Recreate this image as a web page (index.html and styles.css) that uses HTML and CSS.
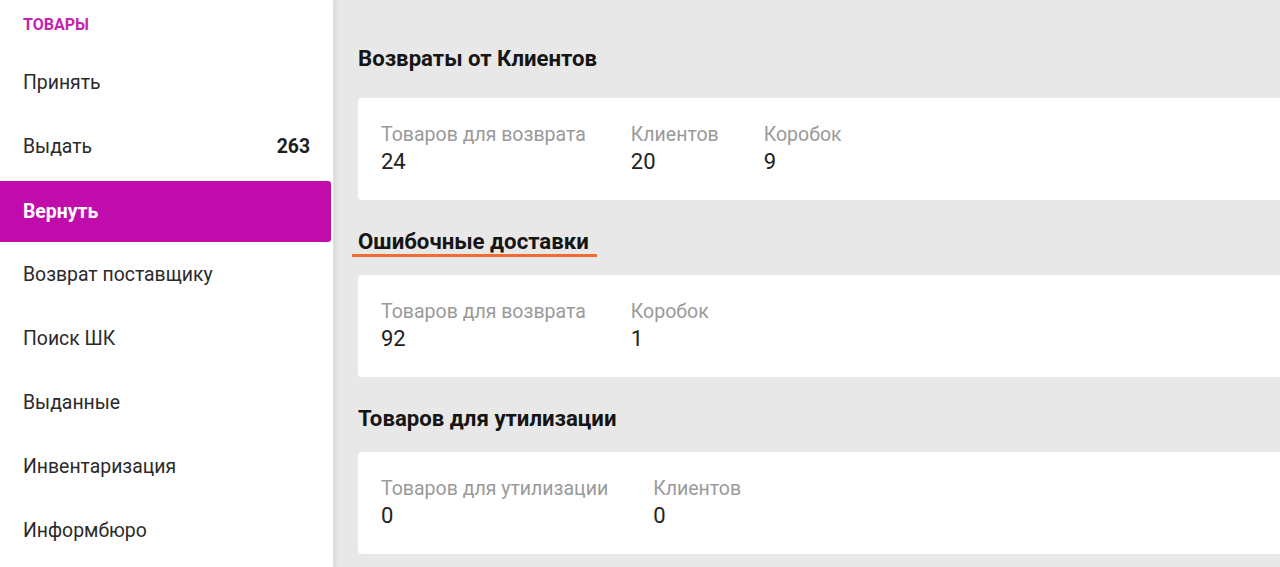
FILE: index.html
```html
<!DOCTYPE html>
<html lang="ru">
<head>
<meta charset="utf-8">
<title>Вернуть</title>
<link rel="stylesheet" href="styles.css">
</head>
<body>
<div class="layout">
  <aside class="sidebar">
    <div class="group-title">ТОВАРЫ</div>
    <nav class="nav">
      <a class="nav-item">Принять</a>
      <a class="nav-item">Выдать <span class="count">263</span></a>
      <a class="nav-item active">Вернуть</a>
      <a class="nav-item">Возврат поставщику</a>
      <a class="nav-item">Поиск ШК</a>
      <a class="nav-item">Выданные</a>
      <a class="nav-item">Инвентаризация</a>
      <a class="nav-item">Информбюро</a>
    </nav>
  </aside>
  <main class="content">
    <section class="section first">
      <h2 class="section-title">Возвраты от Клиентов</h2>
      <div class="card">
        <div class="stat"><div class="label">Товаров для возврата</div><div class="value">24</div></div>
        <div class="stat"><div class="label">Клиентов</div><div class="value">20</div></div>
        <div class="stat"><div class="label">Коробок</div><div class="value">9</div></div>
      </div>
    </section>
    <section class="section">
      <h2 class="section-title"><span class="underlined">Ошибочные доставки</span></h2>
      <div class="card">
        <div class="stat"><div class="label">Товаров для возврата</div><div class="value">92</div></div>
        <div class="stat"><div class="label">Коробок</div><div class="value">1</div></div>
      </div>
    </section>
    <section class="section">
      <h2 class="section-title">Товаров для утилизации</h2>
      <div class="card">
        <div class="stat"><div class="label">Товаров для утилизации</div><div class="value">0</div></div>
        <div class="stat"><div class="label">Клиентов</div><div class="value">0</div></div>
      </div>
    </section>
  </main>
</div>
</body>
</html>
```
FILE: styles.css
```css
* { box-sizing: border-box; }
html, body {
  margin: 0;
  height: 100%;
  overflow: hidden;
}
body {
  font-family: Roboto, "Liberation Sans", sans-serif;
  background: #e8e8e8;
  color: #222;
}
.layout {
  display: flex;
  height: 567px;
}
.sidebar {
  width: 334px;
  flex: 0 0 334px;
  background: #fff;
  box-shadow: 2px 0 4px rgba(0,0,0,0.08);
  border-right: 1px solid #e0e0e0;
  position: relative;
  z-index: 1;
}
.group-title {
  padding: 15px 23px 0;
  height: 50px;
  font-size: 16px;
  line-height: 19px;
  font-weight: 700;
  color: #c424ad;
}
.nav {
  display: flex;
  flex-direction: column;
}
.nav-item {
  display: flex;
  align-items: center;
  justify-content: space-between;
  height: 64px;
  padding: 0 23px;
  font-size: 19.4px;
  color: #2a2a2a;
  text-decoration: none;
}
.nav-item.active {
  background: #c10cab;
  color: #fff;
  font-weight: 700;
  margin: 3px 2px 0 0;
  height: 61px;
  border-radius: 0 3px 3px 0;
}
.count {
  font-weight: 700;
  color: #1e1e1e;
}
.content {
  flex: 1;
  padding: 0 0 0 24px;
  min-width: 0;
}
.section { margin-top: 29px; }
.section.first { margin-top: 46px; }
.section-title {
  margin: 0 0 22px;
  font-size: 22.2px;
  line-height: 24px;
  font-weight: 700;
  color: #151515;
}
.section.first .section-title { margin-bottom: 28px; }
.underlined {
  display: inline-block;
  padding: 0 8px 1px 6px;
  margin: 0 0 -4px -6px;
  border-bottom: 3px solid #ef6b2f;
}
.card {
  display: flex;
  gap: 45px;
  background: #fff;
  border-radius: 4px 0 0 4px;
  margin-right: -20px;
  height: 102px;
  padding: 26px 23px 0;
}
.label {
  font-size: 19.5px;
  line-height: 22px;
  color: #9a9a9a;
}
.value {
  margin-top: 3px;
  font-size: 22px;
  line-height: 26px;
  color: #222;
}
```
